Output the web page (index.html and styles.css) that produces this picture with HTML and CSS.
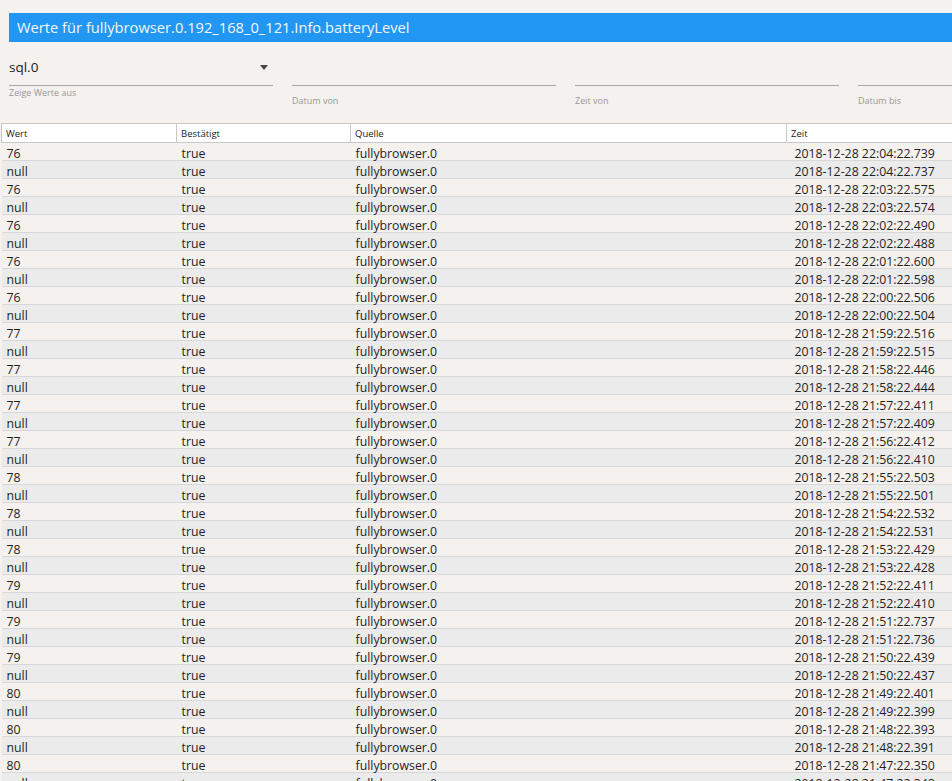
FILE: index.html
```html
<!DOCTYPE html>
<html>
<head>
<meta charset="utf-8">
<link rel="stylesheet" href="styles.css">
</head>
<body>
<div class="title">Werte für fullybrowser.0.192_168_0_121.Info.batteryLevel</div>
<div class="filters">
  <div class="field select-field">
    <div class="control"><span>sql.0</span><span class="arrow"></span></div>
    <div class="label">Zeige Werte aus</div>
  </div>
  <div class="field">
    <div class="control"></div>
    <div class="label low">Datum von</div>
  </div>
  <div class="field">
    <div class="control"></div>
    <div class="label low">Zeit von</div>
  </div>
  <div class="field">
    <div class="control"></div>
    <div class="label low">Datum bis</div>
  </div>
</div>
<table class="grid">
  <colgroup><col class="c1"><col class="c2"><col class="c3"><col class="c4"></colgroup>
  <thead><tr><th>Wert</th><th>Bestätigt</th><th>Quelle</th><th>Zeit</th></tr></thead>
  <tbody id="rows"></tbody>
</table>
<script src="app.js"></script>
</body>
</html>
```
FILE: app.js
```js
var data = [
["76","22:04:22.739"],["null","22:04:22.737"],["76","22:03:22.575"],["null","22:03:22.574"],
["76","22:02:22.490"],["null","22:02:22.488"],["76","22:01:22.600"],["null","22:01:22.598"],
["76","22:00:22.506"],["null","22:00:22.504"],["77","21:59:22.516"],["null","21:59:22.515"],
["77","21:58:22.446"],["null","21:58:22.444"],["77","21:57:22.411"],["null","21:57:22.409"],
["77","21:56:22.412"],["null","21:56:22.410"],["78","21:55:22.503"],["null","21:55:22.501"],
["78","21:54:22.532"],["null","21:54:22.531"],["78","21:53:22.429"],["null","21:53:22.428"],
["79","21:52:22.411"],["null","21:52:22.410"],["79","21:51:22.737"],["null","21:51:22.736"],
["79","21:50:22.439"],["null","21:50:22.437"],["80","21:49:22.401"],["null","21:49:22.399"],
["80","21:48:22.393"],["null","21:48:22.391"],["80","21:47:22.350"],["null","21:47:22.348"]
];
var tb = document.getElementById("rows");
data.forEach(function (d) {
  var tr = document.createElement("tr");
  [d[0], "true", "fullybrowser.0", "2018-12-28 " + d[1]].forEach(function (t, i) {
    var td = document.createElement("td");
    td.textContent = t;
    if (i === 3) td.className = "time";
    tr.appendChild(td);
  });
  tb.appendChild(tr);
});
```
FILE: styles.css
```css
html, body {
  margin: 0;
  padding: 0;
  background: #f4f1ee;
  font-family: "Open Sans", "Noto Sans", sans-serif;
  overflow: hidden;
}
.title {
  margin: 13px 0 0 9px;
  height: 29px;
  line-height: 29px;
  padding-left: 8px;
  background: #2196f3;
  color: #f2f7fc;
  font-size: 14.7px;
  white-space: nowrap;
}
.filters {
  display: flex;
  gap: 19px;
  padding-left: 9px;
  margin-top: 13px;
  height: 68px;
}
.field {
  width: 264px;
  flex: none;
}
.control {
  height: 31px;
  border-bottom: 1px solid #a9a7a5;
  display: flex;
  align-items: center;
  justify-content: space-between;
  font-size: 13.5px;
  color: #222;
  box-sizing: border-box;
  padding-bottom: 6px;
}
.arrow {
  width: 0;
  height: 0;
  border-left: 4.5px solid transparent;
  border-right: 4.5px solid transparent;
  border-top: 5px solid #444;
  margin-right: 5px;
}
.label {
  font-size: 9px;
  color: #9a9898;
  margin-top: 0px;
}
.label.low {
  margin-top: 8px;
}
.grid {
  border-collapse: collapse;
  table-layout: fixed;
  width: 1000px;
  margin-left: 1px;
  font-size: 12.3px;
  color: #1f1f1f;
}
.c1 { width: 175px; }
.c2 { width: 174px; }
.c3 { width: 436px; }
.c4 { width: 215px; }
.grid th {
  background: #fff;
  border: 1px solid #c9c8c7;
  font-weight: normal;
  font-size: 9.5px;
  text-align: left;
  height: 18px;
  padding: 0 4px;
  color: #222;
}
.grid td {
  height: 13px;
  padding: 4px 5px 0;
  border-bottom: 1px solid #d9d8d6;
  white-space: nowrap;
  line-height: 13px;
}
.grid td.time { padding-left: 8px; }
.grid tbody tr:nth-child(odd) { background: #f4f1ee; }
.grid tbody tr:nth-child(even) { background: #ebebeb; }
```
